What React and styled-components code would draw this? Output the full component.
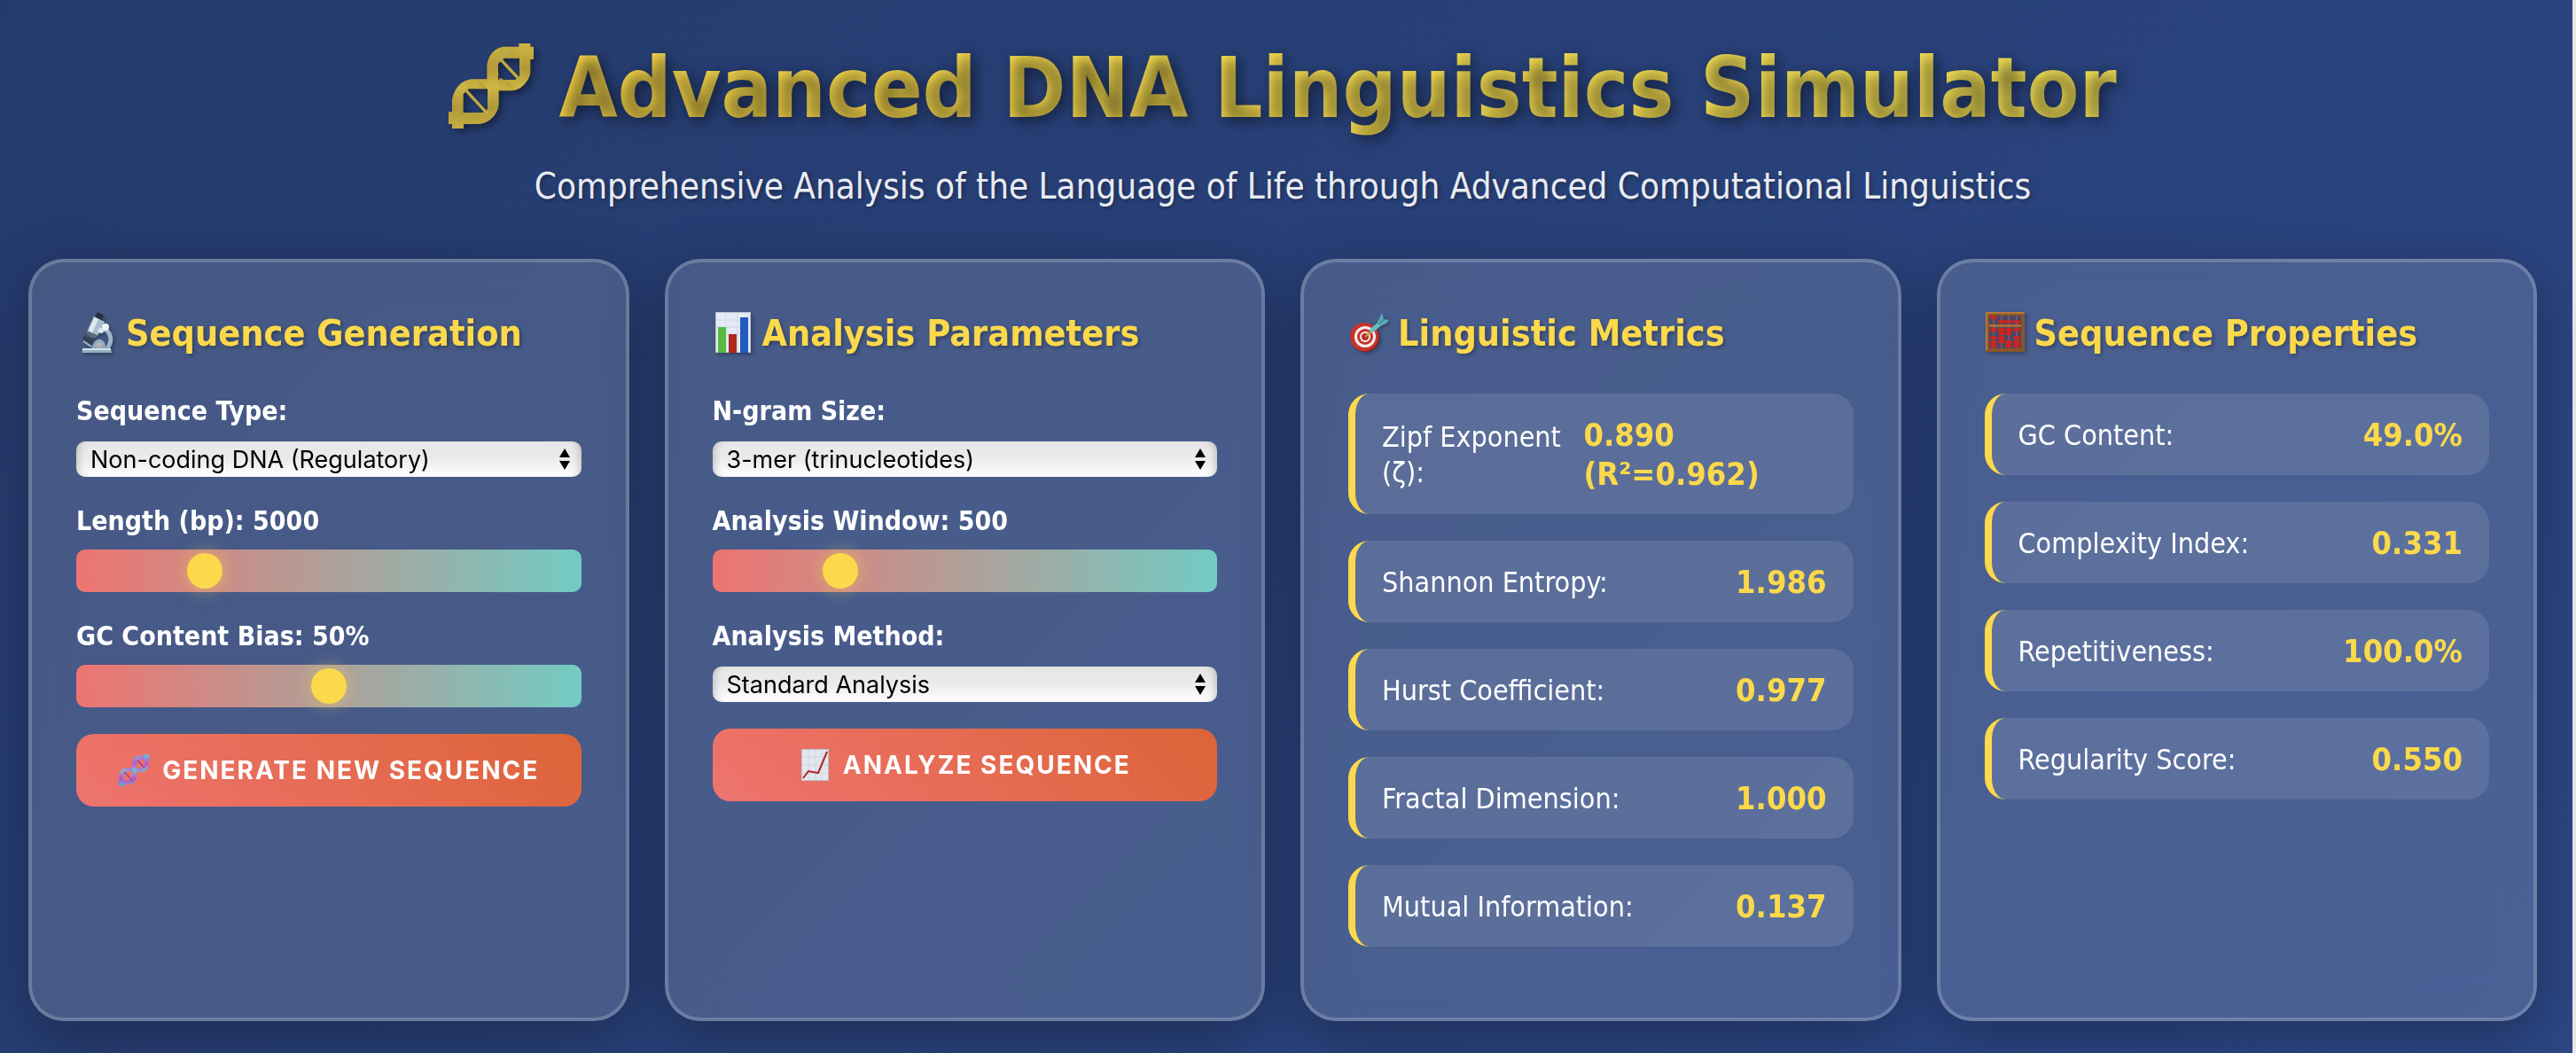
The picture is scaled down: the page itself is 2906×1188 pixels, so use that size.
import React, { useId, useState } from "react";
import styled, { createGlobalStyle } from "styled-components";

const gold = "#fbd94b";
const bodyFont = '"DejaVu Sans Condensed", "DejaVu Sans", sans-serif';
const controlFont = 'Inter, "Liberation Sans", sans-serif';

const GlobalStyle = createGlobalStyle`
  *, *::before, *::after { box-sizing: border-box; }
  body { margin: 0; background: #ebe7e9; font-family: ${bodyFont}; color: #fff; }
  h1, h2, p, dl, dt, dd { margin: 0; }
`;

const Page = styled.div`
  min-height: 100vh;
  padding: 40px 40px 36px 32px;
  border-right: 4px solid #ebe7e9;
  background: linear-gradient(135deg, #253b6d, #2c4785) padding-box;
`;

const Header = styled.header`
  display: flex;
  flex-direction: column;
  align-items: center;
  gap: 28px;
  margin-bottom: 58px;
  text-align: center;
`;

const Title = styled.h1`
  display: flex;
  align-items: center;
  gap: 28px;
  font-size: 95px;
  line-height: 118px;

  svg {
    flex: none;
    width: 96px;
    height: 96px;
    margin-bottom: 4px;
    filter: drop-shadow(4px 4px 4px rgba(0, 0, 0, 0.4));
  }
`;

const TitleText = styled.span`
  background: linear-gradient(45deg, #fbd94b, #fcea5c);
  -webkit-background-clip: text;
  background-clip: text;
  -webkit-text-fill-color: transparent;
  text-shadow: 4px 4px 16px rgba(0, 0, 0, 0.5);
`;

const Subtitle = styled.p`
  font-size: 40px;
  line-height: 48px;
  color: #e9ebf1;
  text-shadow: 2px 2px 4px rgba(0, 0, 0, 0.3);
`;

const CardGrid = styled.main`
  display: grid;
  grid-template-columns: repeat(4, minmax(0, 1fr));
  gap: 40px;
`;

const Card = styled.section`
  padding: 50px;
  border: 4px solid rgba(255, 255, 255, 0.2);
  border-radius: 40px;
  background: rgba(255, 255, 255, 0.15);
  backdrop-filter: blur(20px);
  box-shadow: 0 16px 64px rgba(0, 0, 0, 0.3);
`;

const CardTitle = styled.h2`
  display: flex;
  align-items: center;
  gap: 8px;
  margin-bottom: 38px;
  font-size: 41px;
  line-height: 60px;
  color: ${gold};
  text-shadow: 2px 2px 4px rgba(0, 0, 0, 0.3);

  svg {
    flex: none;
    width: 48px;
    height: 48px;
    filter: drop-shadow(2px 2px 2px rgba(0, 0, 0, 0.3));
  }
`;

const Field = styled.div`
  display: flex;
  flex-direction: column;
  gap: 12px;
  margin-bottom: 30px;
`;

const Label = styled.label`
  font-size: 30px;
  font-weight: bold;
  line-height: 40px;
`;

const SelectBox = styled.div`
  position: relative;
  margin-top: 2px;

  svg {
    position: absolute;
    top: 8px;
    right: 12px;
    width: 14px;
    height: 24px;
    pointer-events: none;
  }
`;

const Select = styled.select`
  display: block;
  width: 100%;
  height: 40px;
  padding: 0 40px 0 16px;
  border: 0;
  border-radius: 10px;
  appearance: none;
  background: linear-gradient(#e6e6e6, #ebebeb 50%, #ffffff);
  box-shadow: inset 8px 0 8px -6px rgba(0, 0, 0, 0.2), inset -8px 0 8px -6px rgba(0, 0, 0, 0.2);
  color: #000;
  font: 27px ${controlFont};
`;

const Slider = styled.input`
  display: block;
  width: 100%;
  height: 48px;
  margin: 0;
  border-radius: 10px;
  appearance: none;
  background: linear-gradient(90deg, #ee7470, #72cbc3);

  &::-webkit-slider-thumb {
    width: 40px;
    height: 40px;
    border-radius: 50%;
    appearance: none;
    background: ${gold};
    box-shadow: 0 0 20px rgba(251, 217, 75, 0.5);
    cursor: pointer;
  }
`;

const ActionButton = styled.button`
  display: flex;
  align-items: center;
  justify-content: center;
  gap: 14px;
  width: 100%;
  height: 82px;
  padding: 0 20px;
  border: 0;
  border-radius: 20px;
  background: linear-gradient(45deg, #ee7470, #dd6337);
  color: #fff;
  font: 700 28px ${controlFont};
  letter-spacing: 2px;
  text-transform: uppercase;
  cursor: pointer;

  svg {
    flex: none;
    width: 36px;
    height: 36px;
  }
`;

const Metrics = styled.dl`
  display: flex;
  flex-direction: column;
  gap: 30px;
  margin-bottom: 30px;
`;

const Metric = styled.div`
  display: flex;
  align-items: center;
  justify-content: space-between;
  padding: 25px 30px 23px;
  border-left: 8px solid ${gold};
  border-radius: 24px;
  background: rgba(255, 255, 255, 0.1);
`;

const MetricName = styled.dt`
  font-size: 32px;
  line-height: 40px;
`;

const MetricValue = styled.dd`
  font-size: 36px;
  font-weight: bold;
  line-height: 44px;
  color: ${gold};
`;

const dnaPalettes = {
  gold: { top: "#cfb644", mid: "#b09a38", low: "#c6ae40", rung: "#c2aa40", rung2: "#b8a23c" },
  color: { top: "#6cc4d2", mid: "#c04fd0", low: "#5fb3c4", rung: "#8a3fc0", rung2: "#c65fc8" },
};

function DnaIcon({ tone }) {
  const id = useId();
  const c = dnaPalettes[tone];
  return (
    <svg viewBox="30 36 288 288" aria-hidden="true">
      <defs>
        <linearGradient id={id} x1="0" y1="0" x2="0" y2="1">
          <stop offset="0" stopColor={c.top} />
          <stop offset="0.3" stopColor={c.mid} />
          <stop offset="0.5" stopColor={c.top} />
          <stop offset="0.75" stopColor={c.mid} />
          <stop offset="1" stopColor={c.low} />
        </linearGradient>
      </defs>
      <path
        fill={`url(#${id})`}
        fillRule="evenodd"
        d="M42 324V235C42 200 68 160 110 157H160V118C160 78 188 47 222 47H268V36H307V47H318V90H307V130C307 160 276 196 244 196H200V238C200 276 166 309 130 309H81V324H42V309H30V267H42ZM98 190L80 207V270H145L162 258V190ZM218 86L198 105V159H256L270 146V86Z"
      />
      <path
        stroke={c.rung}
        strokeWidth="10"
        strokeLinecap="round"
        d="M90 196L160 272M208 92L268 156"
      />
      <path
        stroke={c.rung2}
        strokeWidth="11"
        strokeLinecap="round"
        opacity="0.8"
        d="M88 276L120 290M136 172L150 184M180 122L194 142M206 158L236 178M240 64L258 82"
      />
      <path
        fill={c.rung2}
        opacity="0.35"
        d="M81 270H145C158 270 158 309 130 309H81ZM200 159H256C268 159 262 194 240 196H200ZM98 190L90 180C92 166 98 157 110 157H160V190ZM218 86L204 70C206 54 212 47 222 47H268V86Z"
      />
    </svg>
  );
}

function MicroscopeIcon() {
  return (
    <svg viewBox="0 0 48 48" aria-hidden="true">
      <path fill="none" stroke="#9db6c6" strokeWidth="5" d="M31 19C40 23 41 33 35 41" />
      <path fill="#8fabbd" d="M17 41L20 34Q26 27 32 34L34 42H17Z" />
      <path fill="#93aebf" d="M7 41H39L40 46H7Z" />
      <path fill="#d3e1ea" d="M7 41H39V43H7Z" />
      <path stroke="#33404c" strokeWidth="4" d="M8 28L19 35" />
      <path stroke="#a4bac8" strokeWidth="2" d="M8 33L17 39" />
      <path fill="#26303a" d="M24 0L31 4L28 10L21 6Z" />
      <path fill="#a9bfce" d="M20 5L32 11L24 27Q16 30 12 22Z" />
      <path fill="#dce8f0" d="M20 6L25 8L18 24L14 21Z" />
      <path fill="#5b6d7c" d="M12 21L24 26L22 29Q15 30 12 24Z" />
      <circle cx="33" cy="17" r="4" fill="#f2f6f8" />
      <circle cx="28" cy="21" r="3" fill="#dfe8ee" />
      <circle cx="26" cy="37" r="3" fill="#b9aeb0" />
    </svg>
  );
}

function BarChartIcon() {
  return (
    <svg viewBox="0 0 48 48" aria-hidden="true">
      <path fill="#b7c3d3" d="M3 0H43V46H3Z" />
      <path fill="#e4ebf4" d="M4 1H42V45H4Z" />
      <path stroke="#cfd9e6" d="M4 9H42M4 17H42M4 25H42M4 33H42M15 1V45M28 1V45" />
      <path fill="#56bb3f" d="M6 17H15V46H6Z" />
      <path fill="#b0281f" d="M18 25H27V46H18Z" />
      <path fill="#2459bd" d="M31 6H40V46H31Z" />
    </svg>
  );
}

function TargetIcon() {
  return (
    <svg viewBox="0 0 48 48" aria-hidden="true">
      <ellipse cx="19" cy="29" rx="16" ry="16" fill="#8e1f1c" />
      <ellipse cx="18" cy="28" rx="16" ry="16" fill="#c9332c" />
      <circle cx="19" cy="28" r="12" fill="#f5f1f1" />
      <circle cx="19" cy="28" r="9" fill="#c9332c" />
      <circle cx="19" cy="28" r="6" fill="#f5f1f1" />
      <circle cx="19" cy="28" r="4" fill="#b92a25" />
      <path stroke="#c9a14a" strokeWidth="2" d="M19 28L27 21" />
      <path stroke="#68bcc6" strokeWidth="5" d="M25 22L36 13" />
      <path fill="#5aa9b4" d="M33 11L38 1L40 8L46 9L43 13L36 16Z" />
      <path stroke="#2f7480" strokeWidth="1" d="M34 14L44 5" />
    </svg>
  );
}

function AbacusIcon() {
  const beads = [
    [10, [6, 20, 29, 34, 38]],
    [19, [11, 20, 24, 29, 33]],
    [27, [11, 20, 24, 34, 38]],
    [36, [11, 20, 29, 34, 38]],
  ];
  return (
    <svg viewBox="0 0 48 48" aria-hidden="true">
      <path fill="#8a5526" d="M1 0H45V45H1Z" />
      <path fill="#b5793c" d="M1 0H45V2H3V43H1Z" />
      <path fill="#4a4668" d="M5 4H41V41H5Z" />
      <path fill="#a86d33" d="M5 14H41V17H5Z" />
      {beads.map(([x, ys]) => (
        <g key={x}>
          <path stroke="#9a6a5a" d={`M${x} 4V41`} />
          {ys.map((y) => (
            <ellipse key={y} cx={x} cy={y} rx="4" ry="2" fill="#d2231c" />
          ))}
        </g>
      ))}
    </svg>
  );
}

function TrendIcon() {
  return (
    <svg viewBox="0 0 36 36" aria-hidden="true">
      <path fill="#b9c1cb" d="M3 0H34V36H3Z" />
      <path fill="#e1e7ee" d="M4 1H33V35H4Z" />
      <path stroke="#ccd4dd" d="M4 9H33M4 18H33M4 27H33M11 1V35M19 1V35M26 1V35" />
      <path fill="none" stroke="#b3271f" strokeWidth="2" d="M5 33L11 25L22 27L32 3" />
    </svg>
  );
}

function SelectField({ label, options }) {
  const id = useId();
  return (
    <Field>
      <Label htmlFor={id}>{label}</Label>
      <SelectBox>
        <Select id={id}>
          {options.map((option) => (
            <option key={option}>{option}</option>
          ))}
        </Select>
        <svg viewBox="0 0 14 24" aria-hidden="true">
          <path d="M7 0L13 10H1ZM7 24L13 14H1Z" />
        </svg>
      </SelectBox>
    </Field>
  );
}

function SliderField({ label, initial, unit = "", min, max, step }) {
  const id = useId();
  const [value, setValue] = useState(initial);
  return (
    <Field>
      <Label htmlFor={id}>{`${label}: ${value}${unit}`}</Label>
      <Slider
        id={id}
        type="range"
        min={min}
        max={max}
        step={step}
        value={value}
        onChange={(event) => setValue(Number(event.target.value))}
      />
    </Field>
  );
}

function MetricList({ items }) {
  return (
    <Metrics>
      {items.map(([name, value]) => (
        <Metric key={name}>
          <MetricName>{name}:</MetricName>
          <MetricValue>{value}</MetricValue>
        </Metric>
      ))}
    </Metrics>
  );
}

const linguisticMetrics = [
  ["Zipf Exponent (ζ)", "0.890 (R²=0.962)"],
  ["Shannon Entropy", "1.986"],
  ["Hurst Coefficient", "0.977"],
  ["Fractal Dimension", "1.000"],
  ["Mutual Information", "0.137"],
];

const sequenceProperties = [
  ["GC Content", "49.0%"],
  ["Complexity Index", "0.331"],
  ["Repetitiveness", "100.0%"],
  ["Regularity Score", "0.550"],
];

export default function App() {
  return (
    <>
      <GlobalStyle />
      <Page>
        <Header>
          <Title>
            <DnaIcon tone="gold" />
            <TitleText>Advanced DNA Linguistics Simulator</TitleText>
          </Title>
          <Subtitle>
            Comprehensive Analysis of the Language of Life through Advanced Computational Linguistics
          </Subtitle>
        </Header>
        <CardGrid>
          <Card>
            <CardTitle>
              <MicroscopeIcon />
              Sequence Generation
            </CardTitle>
            <SelectField label="Sequence Type:" options={["Non-coding DNA (Regulatory)"]} />
            <SliderField label="Length (bp)" initial={5000} min={1000} max={18000} step={100} />
            <SliderField label="GC Content Bias" initial={50} unit="%" min={20} max={80} step={1} />
            <ActionButton type="button">
              <DnaIcon tone="color" />
              Generate New Sequence
            </ActionButton>
          </Card>
          <Card>
            <CardTitle>
              <BarChartIcon />
              Analysis Parameters
            </CardTitle>
            <SelectField label="N-gram Size:" options={["3-mer (trinucleotides)"]} />
            <SliderField label="Analysis Window" initial={500} min={100} max={1800} step={50} />
            <SelectField label="Analysis Method:" options={["Standard Analysis"]} />
            <ActionButton type="button">
              <TrendIcon />
              Analyze Sequence
            </ActionButton>
          </Card>
          <Card>
            <CardTitle>
              <TargetIcon />
              Linguistic Metrics
            </CardTitle>
            <MetricList items={linguisticMetrics} />
          </Card>
          <Card>
            <CardTitle>
              <AbacusIcon />
              Sequence Properties
            </CardTitle>
            <MetricList items={sequenceProperties} />
          </Card>
        </CardGrid>
      </Page>
    </>
  );
}
